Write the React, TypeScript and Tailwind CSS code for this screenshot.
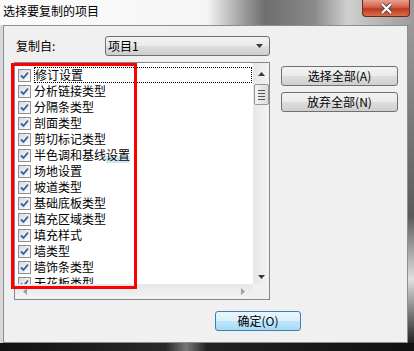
import React from "react";

const FONT = "font-['SimSun','Noto_Sans_CJK_SC',sans-serif]";

const ITEMS = [
  "修订设置",
  "分析链接类型",
  "分隔条类型",
  "剖面类型",
  "剪切标记类型",
  "半色调和基线设置",
  "场地设置",
  "坡道类型",
  "基础底板类型",
  "填充区域类型",
  "填充样式",
  "墙类型",
  "墙饰条类型",
  "天花板类型",
];

function Check() {
  return (
    <span className="flex h-[13px] w-[13px] shrink-0 items-center justify-center border border-[#8e8f8f] bg-[linear-gradient(135deg,#dcdcdc,#fbfbfb)]">
      <svg width="9" height="9" viewBox="0 0 9 9">
        <path d="M1 4.5 L3.5 7 L8 1.5" fill="none" stroke="#3b5aa5" strokeWidth="1.8" />
      </svg>
    </span>
  );
}

function WinButton({ children, primary }: { children: React.ReactNode; primary?: boolean }) {
  return (
    <button
      className={
        primary
          ? "flex h-[20px] w-[86px] items-center justify-center rounded-[3px] border border-[#3c7fb1] bg-[linear-gradient(#e9f6fd_0%,#d9f0fc_50%,#bee6fd_51%,#a7d9f5_100%)] text-[12px] text-black"
          : "flex h-[20px] w-[117px] items-center justify-center rounded-[3px] border border-[#707070] bg-[linear-gradient(#f2f2f2_0%,#ebebeb_50%,#dddddd_51%,#cfcfcf_100%)] text-[12px] text-black"
      }
    >
      {children}
    </button>
  );
}

function Arrow({ dir }: { dir: "up" | "down" | "left" | "right" }) {
  const pts = {
    up: "0,4 7,4 3.5,0",
    down: "0,0 7,0 3.5,4",
    left: "4,0 4,7 0,3.5",
    right: "0,0 0,7 4,3.5",
  }[dir];
  const w = dir === "up" || dir === "down" ? 7 : 4;
  const h = dir === "up" || dir === "down" ? 4 : 7;
  return (
    <svg width={w} height={h} viewBox={`0 0 ${w} ${h}`}>
      <polygon points={pts} fill={dir === "left" || dir === "right" ? "#a0a0a0" : "#3a3a3a"} />
    </svg>
  );
}

export default function App() {
  return (
    <div className={`flex h-[351px] w-[414px] flex-col overflow-hidden bg-[#1b1b1b] ${FONT}`}>
      {/* title bar */}
      <div className="flex h-[25px] shrink-0 items-start justify-between bg-[linear-gradient(to_right,#fbfbfb_0%,#f6f6f6_50%,#b8b8b8_56%,#6e6e6e_64%,#8a8a8a_76%,#d0d0d0_84%,#9a9a9a_100%)]">
        <span className="pl-[3px] pt-[4px] text-[12px] leading-[14px] text-black">选择要复制的项目</span>
        <div className="mr-[4px] flex h-[17px] w-[48px] items-center justify-center rounded-b-[4px] border border-t-0 border-[#6b2a20] bg-[linear-gradient(#e8a18f_0%,#d0634c_45%,#c0391c_55%,#d56e4c_100%)]">
          <svg width="13" height="11" viewBox="0 0 13 11">
            <path d="M2 1 L11 10 M11 1 L2 10" stroke="#4a4a4a" strokeWidth="4" />
            <path d="M2 1 L11 10 M11 1 L2 10" stroke="#ffffff" strokeWidth="2.2" />
          </svg>
        </div>
      </div>

      <div className="flex h-[318px] shrink-0">
        <div className="w-[3px] bg-[#d8d8d8]" />
        {/* client */}
        <div className="flex h-[318px] w-[405px] flex-col border border-[#8d8d8d] bg-[#f0f0f0] pl-[10px] pt-[10px]">
          <div className="flex items-center">
            <span className="w-[91px] pl-[2px] text-[12px] text-black">复制自:</span>
            <div className="flex h-[20px] w-[165px] items-center justify-between rounded-[3px] border border-[#707070] bg-[linear-gradient(#f2f2f2_0%,#ebebeb_50%,#dddddd_51%,#cfcfcf_100%)] pl-[2px] pr-[6px] text-[12px] text-black">
              <span>项目1</span>
              <Arrow dir="down" />
            </div>
          </div>

          <div className="mt-[6px] flex">
            {/* list */}
            <div className="relative flex h-[238px] w-[256px] flex-col border border-[#828790] bg-white">
              <div className="flex flex-1 overflow-hidden">
                <div className="flex flex-1 flex-col overflow-hidden pl-[3px] pt-[4px]">
                  {ITEMS.map((t, i) => (
                    <div key={t} className="flex h-[16px] shrink-0 items-center gap-[3px]">
                      <Check />
                      <span
                        className={
                          i === 0
                            ? "flex h-[16px] w-[218px] items-center border border-dotted border-black text-[12px] leading-none text-black"
                            : "text-[12px] leading-none text-black"
                        }
                      >
                        {t === "半色调和基线设置" ? (
                          <>
                            半色调和基线<span className="bg-[linear-gradient(transparent_60%,#cde8f4_60%)]">设置</span>
                          </>
                        ) : (
                          t
                        )}
                      </span>
                    </div>
                  ))}
                </div>
                {/* vertical scrollbar */}
                <div className="flex w-[16px] flex-col items-center bg-[linear-gradient(to_right,#e6e6e6,#f3f3f3)] pt-[4px]">
                  <div className="flex h-[14px] items-center">
                    <Arrow dir="up" />
                  </div>
                  <div className="mt-[3px] flex h-[21px] w-[15px] flex-col items-center justify-center gap-[2px] rounded-[2px] border border-[#979797] bg-[linear-gradient(to_right,#f4f4f4,#dcdcdc)]">
                    <span className="h-px w-[7px] bg-[#555]" />
                    <span className="h-px w-[7px] bg-[#555]" />
                    <span className="h-px w-[7px] bg-[#555]" />
                    <span className="h-px w-[7px] bg-[#555]" />
                  </div>
                  <div className="flex-1" />
                  <div className="flex h-[14px] items-center">
                    <Arrow dir="down" />
                  </div>
                </div>
              </div>
              {/* horizontal scrollbar */}
              <div className="flex h-[15px] shrink-0">
                <div className="flex flex-1 items-center justify-between bg-[linear-gradient(#e8e8e8,#f3f3f3)] px-[8px]">
                  <Arrow dir="left" />
                  <Arrow dir="right" />
                </div>
                <div className="w-[16px] bg-[#f0f0f0]" />
              </div>
              {/* red highlight */}
              <div className="absolute left-[-4px] top-[0px] h-[226px] w-[126px] border-[3px] border-[#ff0000]" />
            </div>

            <div className="ml-[11px] flex flex-col gap-[6px] pt-[4px]">
              <WinButton>选择全部(A)</WinButton>
              <WinButton>放弃全部(N)</WinButton>
            </div>
          </div>

          <div className="ml-[201px] mt-[11px]">
            <WinButton primary>确定(O)</WinButton>
          </div>
        </div>
        <div className="w-[6px] bg-[linear-gradient(#9a9a9a,#5a5a5a_60%,#e0e0e0_80%,#222)]" />
      </div>
      <div className="h-[8px] bg-[linear-gradient(to_right,#111,#2a2a2a_40%,#777_45%,#222_50%,#111)]" />
    </div>
  );
}
